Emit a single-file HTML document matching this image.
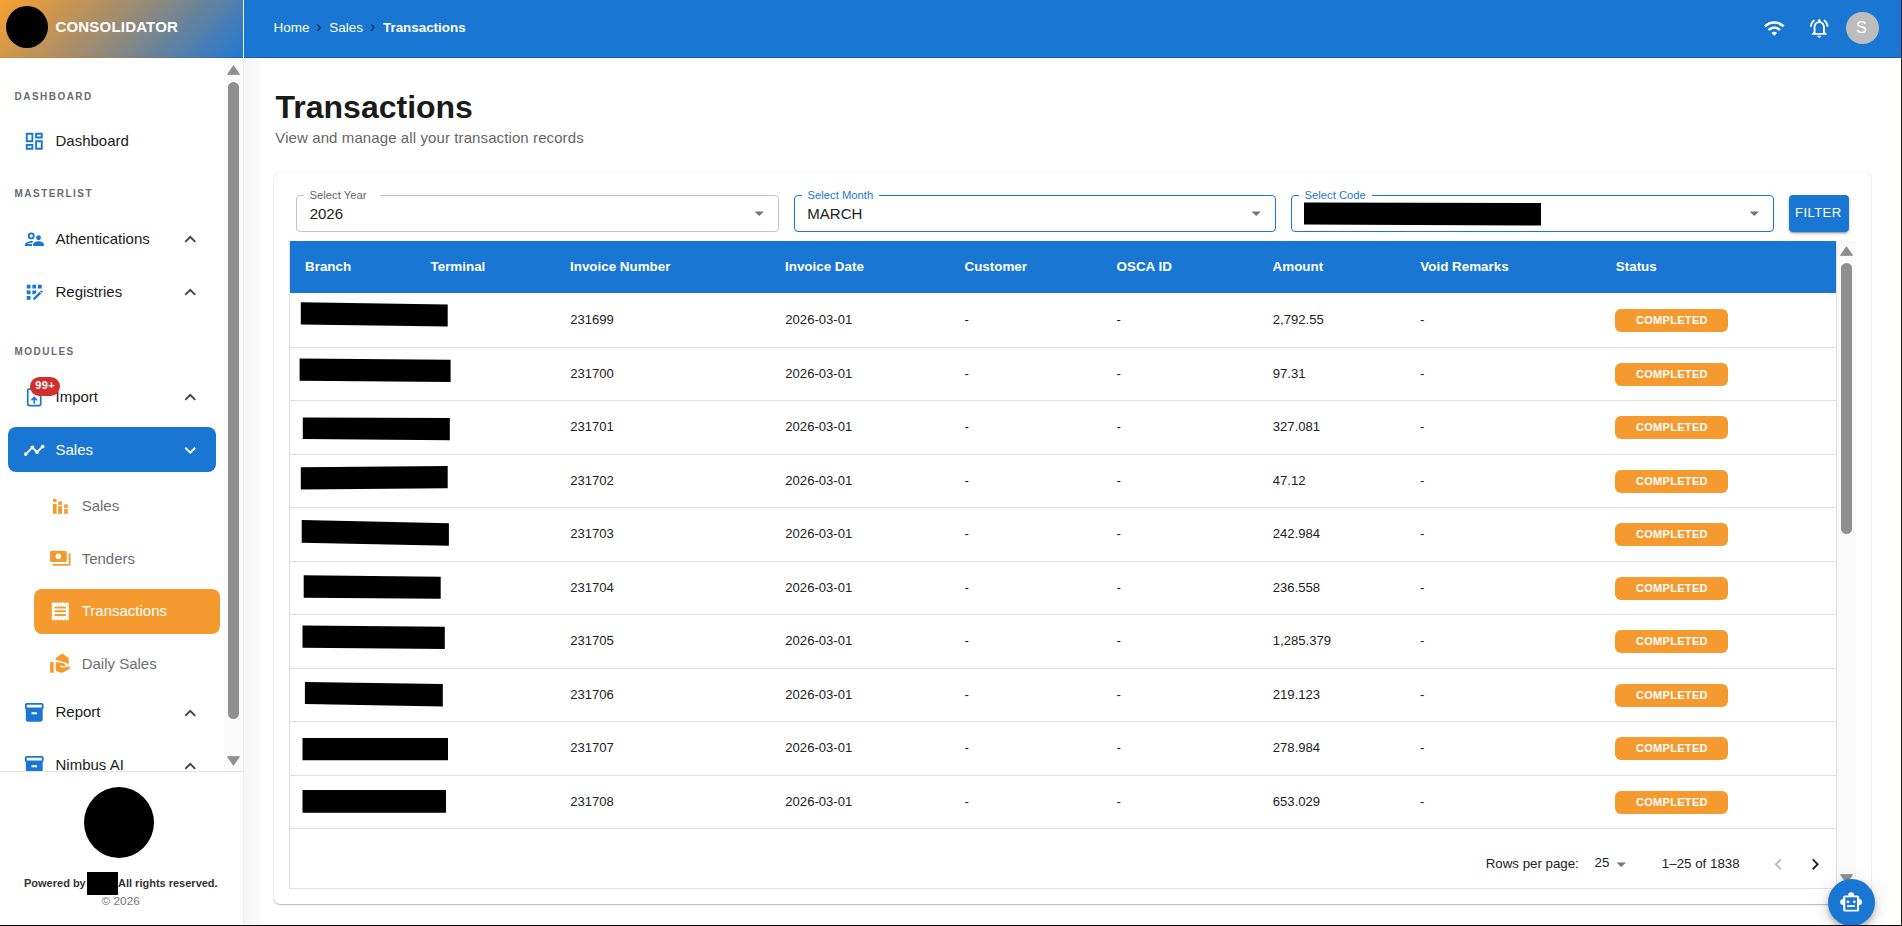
<!DOCTYPE html>
<html><head><meta charset="utf-8"><title>Transactions</title>
<style>
*{box-sizing:border-box;margin:0;padding:0}
html,body{width:1902px;height:926px;overflow:hidden;background:#fff;font-family:'Liberation Sans', sans-serif}
.t{position:absolute;white-space:nowrap;line-height:normal;font-family:'Liberation Sans', sans-serif}
.ic{position:absolute;display:block}
.abs{position:absolute}
</style></head><body>
<div class="abs" style="left:0;top:0;width:243px;height:58px;background:linear-gradient(135deg,#f7a130 0%,#a08c70 45%,#1f78d4 100%)"></div>
<div class="abs" style="left:0;top:57px;width:243px;height:1px;background:linear-gradient(90deg,#dc8a26,#9a7a50 50%,#1f64b8)"></div>
<div class="abs" style="left:6px;top:6px;width:42px;height:42px;border-radius:50%;background:#000"></div>
<div class="t" style="left:55.4px;top:18.42px;font-size:15px;color:#fff;font-weight:bold;letter-spacing:0.2px;">CONSOLIDATOR</div>
<div class="abs" style="left:243px;top:0;width:1px;height:926px;background:#e8eef7"></div>
<div class="abs" style="left:224px;top:58px;width:19px;height:713px;background:#fafafa"></div>
<svg class="ic" style="left:227px;top:65px;width:13px;height:10px" viewBox="0 0 13 10"><path d="M6.5 0.6 L12.6 9.4 L0.4 9.4z" fill="#8f8f8f" stroke="#8f8f8f" stroke-width="0.8" stroke-linejoin="round"/></svg>
<div class="abs" style="left:228px;top:82px;width:11px;height:637px;border-radius:5.5px;background:#8f8f8f"></div>
<svg class="ic" style="left:227px;top:756px;width:13px;height:10px" viewBox="0 0 13 10"><path d="M0.4 0.6 L12.6 0.6 L6.5 9.4z" fill="#8f8f8f" stroke="#8f8f8f" stroke-width="0.8" stroke-linejoin="round"/></svg>
<div class="t" style="left:14.6px;top:91.15px;font-size:10px;color:#6b6b6b;font-weight:bold;letter-spacing:1.45px;">DASHBOARD</div>
<div class="t" style="left:14.6px;top:188.05px;font-size:10px;color:#6b6b6b;font-weight:bold;letter-spacing:1.45px;">MASTERLIST</div>
<div class="t" style="left:14.6px;top:346.05px;font-size:10px;color:#6b6b6b;font-weight:bold;letter-spacing:1.45px;">MODULES</div>
<svg class="ic" style="left:23.2px;top:130.2px;width:22.5px;height:22.5px" viewBox="0 0 24 24"><path fill="#1976d2" d="M19 5v2h-4V5h4M9 5v6H5V5h4m10 8v6h-4v-6h4M9 17v2H5v-2h4M21 3h-8v6h8V3zM11 3H3v10h8V3zm10 8h-8v10h8V11zm-10 4H3v6h8v-6z"/></svg>
<div class="t" style="left:55.5px;top:132.03px;font-size:15px;color:#212121;font-weight:normal;letter-spacing:0px;">Dashboard</div>
<svg class="ic" style="left:20px;top:228px;width:30px;height:22px" viewBox="20 228 30 22"><g fill="#1976d2"><circle cx="31.3" cy="235.9" r="2.5" fill="none" stroke="#1976d2" stroke-width="1.9"/><circle cx="38.5" cy="237.8" r="2.45"/><path d="M33.1 245.9V244.3C33.1 242.3 36 241.3 38.45 241.3C40.9 241.3 43.8 242.3 43.8 244.3V245.9Z"/><path d="M24.9 245.9V244.6C24.9 242.4 28.6 241 33.2 240.9L32.2 242.7C29.5 242.8 27.2 243.5 26.9 244.1H32V245.9Z"/></g></svg>
<div class="t" style="left:55.5px;top:230.12px;font-size:15px;color:#212121;font-weight:normal;letter-spacing:0px;">Athentications</div>
<svg class="ic" style="left:179px;top:228px;width:22.5px;height:22.5px" viewBox="0 0 24 24"><path fill="#424242" d="M12 8l-6 6 1.41 1.41L12 10.83l4.59 4.58L18 14z"/></svg>
<svg class="ic" style="left:23px;top:280.9px;width:22.5px;height:22.5px" viewBox="0 0 24 24"><path fill="#1976d2" d="M10 4h4v4h-4zM4 16h4v4H4zm0-6h4v4H4zm0-6h4v4H4zm10 8.42V10h-4v4h2.42zm6.88-1.13-1.17-1.17c-.16-.16-.42-.16-.58 0l-.88.88 1.75 1.75.88-.88c.16-.16.16-.42 0-.58zM11 18.25V20h1.75l6.67-6.67-1.75-1.75zM16 4h4v4h-4z"/></svg>
<div class="t" style="left:55.5px;top:282.62px;font-size:15px;color:#212121;font-weight:normal;letter-spacing:0px;">Registries</div>
<svg class="ic" style="left:179px;top:280.7px;width:22.5px;height:22.5px" viewBox="0 0 24 24"><path fill="#424242" d="M12 8l-6 6 1.41 1.41L12 10.83l4.59 4.58L18 14z"/></svg>
<svg class="ic" style="left:22px;top:384px;width:24px;height:26px" viewBox="22 384 24 26"><rect x="27.75" y="388.95" width="13" height="16.7" rx="1.8" fill="none" stroke="#1976d2" stroke-width="1.7"/><path fill="#1976d2" d="M34.25 396.3L37.6 399.7L36.5 400.8L35.1 399.4V403.6H33.4V399.4L32 400.8L30.9 399.7Z"/></svg>
<div class="t" style="left:55.5px;top:387.82px;font-size:15px;color:#212121;font-weight:normal;letter-spacing:0px;">Import</div>
<svg class="ic" style="left:179px;top:386px;width:22.5px;height:22.5px" viewBox="0 0 24 24"><path fill="#424242" d="M12 8l-6 6 1.41 1.41L12 10.83l4.59 4.58L18 14z"/></svg>
<div class="abs" style="left:30px;top:377px;width:30px;height:19px;border-radius:9.5px;background:#d32f2f"></div>
<div class="t" style="left:35.3px;top:379.35px;font-size:11px;color:#fff;font-weight:bold;letter-spacing:0.3px;">99+</div>
<div class="abs" style="left:8px;top:427px;width:208px;height:45px;border-radius:8px;background:#1976d2"></div>
<svg class="ic" style="left:23px;top:439.2px;width:22.5px;height:22.5px" viewBox="0 0 24 24"><path fill="#fff" d="M23 8c0 1.1-.9 2-2 2-.18 0-.35-.02-.51-.07l-3.56 3.55c.05.16.07.34.07.52 0 1.1-.9 2-2 2s-2-.9-2-2c0-.18.02-.36.07-.52l-2.55-2.55c-.16.05-.34.07-.52.07s-.36-.02-.52-.07l-4.55 4.56c.05.16.07.33.07.51 0 1.1-.9 2-2 2s-2-.9-2-2 .9-2 2-2c.18 0 .35.02.51.07l4.56-4.55C8.02 9.36 8 9.18 8 9c0-1.1.9-2 2-2s2 .9 2 2c0 .18-.02.36-.07.52l2.55 2.55c.16-.05.34-.07.52-.07s.36.02.52.07l3.55-3.56C19.02 8.35 19 8.18 19 8c0-1.1.9-2 2-2s2 .9 2 2z"/></svg>
<div class="t" style="left:55.5px;top:441.43px;font-size:15px;color:#fff;font-weight:normal;letter-spacing:0px;">Sales</div>
<svg class="ic" style="left:179px;top:439px;width:22.5px;height:22.5px" viewBox="0 0 24 24"><path fill="#fff" d="M16.59 8.59L12 13.17 7.41 8.59 6 10l6 6 6-6z"/></svg>
<svg class="ic" style="left:48px;top:494px;width:24px;height:24px" viewBox="48 494 24 24"><g fill="#f59a2f"><rect x="52.9" y="498.9" width="3.7" height="3.1"/><rect x="52.9" y="503.9" width="3.7" height="9.9"/><rect x="58.2" y="501.4" width="3.8" height="3.5"/><rect x="58.2" y="506.1" width="3.8" height="7.7"/><rect x="64.1" y="504.4" width="3.7" height="3.5"/><rect x="64.1" y="509.1" width="3.7" height="4.7"/></g></svg>
<div class="t" style="left:81.7px;top:497.43px;font-size:15px;color:#6e6e6e;font-weight:normal;letter-spacing:0px;">Sales</div>
<svg class="ic" style="left:49.3px;top:546.6px;width:22.5px;height:22.5px" viewBox="0 0 24 24"><path fill="#f59a2f" d="M19 14V6c0-1.1-.9-2-2-2H3c-1.1 0-2 .9-2 2v8c0 1.1.9 2 2 2h14c1.1 0 2-.9 2-2zm-9-1c-1.66 0-3-1.34-3-3s1.34-3 3-3 3 1.34 3 3-1.34 3-3 3zm13-6v11c0 1.1-.9 2-2 2H4v-2h17V7h2z"/></svg>
<div class="t" style="left:81.7px;top:549.62px;font-size:15px;color:#6e6e6e;font-weight:normal;letter-spacing:0px;">Tenders</div>
<div class="abs" style="left:34px;top:589px;width:186px;height:45px;border-radius:8px;background:#f59a2f"></div>
<svg class="ic" style="left:48.9px;top:599.9px;width:22.5px;height:22.5px" viewBox="0 0 24 24"><path fill="#fff" d="M18 17H6v-2h12v2zm0-4H6v-2h12v2zm0-4H6V7h12v2zM3 22l1.5-1.5L6 22l1.5-1.5L9 22l1.5-1.5L12 22l1.5-1.5L15 22l1.5-1.5L18 22l1.5-1.5L21 22V2l-1.5 1.5L18 2l-1.5 1.5L15 2l-1.5 1.5L12 2l-1.5 1.5L9 2 7.5 3.5 6 2 4.5 3.5 3 2v20z"/></svg>
<div class="t" style="left:81.7px;top:602.02px;font-size:15px;color:#fff;font-weight:normal;letter-spacing:0px;">Transactions</div>
<svg class="ic" style="left:48px;top:650px;width:24px;height:26px" viewBox="48 650 24 26"><g fill="#f59a2f"><rect x="50.1" y="662.1" width="3.6" height="10.7"/><path d="M62.3 653.4L68.7 658V665.6C68.2 664.4 67.3 663.6 66 663.1L60.4 661.1C59.3 660.7 57.6 660.3 55.7 660.3V658Z"/><path d="M55.7 662.2H58.2C59.8 662.2 61.3 662.6 62.6 663.1L64.6 663.9C65.4 664.3 65.6 665.2 65.2 665.9C64.8 666.5 64.1 666.7 63.4 666.5L60.3 665.6L59.9 666.6L62.5 667.5C63.3 667.8 64.1 667.8 64.9 667.5L69.6 666.3L69.8 668.8L64 672C62.9 672.7 61.5 672.9 60.3 672.5L55.7 670.7Z"/></g></svg>
<div class="t" style="left:81.7px;top:654.62px;font-size:15px;color:#6e6e6e;font-weight:normal;letter-spacing:0px;">Daily Sales</div>
<svg class="ic" style="left:23.1px;top:701.1px;width:22.5px;height:22.5px" viewBox="0 0 24 24"><path fill="#1976d2" d="M20 2H4c-1 0-2 .9-2 2v3.01c0 .72.43 1.34 1 1.69V20c0 1.1 1.1 2 2 2h14c.9 0 2-.9 2-2V8.7c.57-.35 1-.97 1-1.69V4c0-1.1-1-2-2-2zm-5 12H9v-2h6v2zm5-7H4V4l16-.02V7z"/></svg>
<div class="t" style="left:55.5px;top:703.32px;font-size:15px;color:#212121;font-weight:normal;letter-spacing:0px;">Report</div>
<svg class="ic" style="left:179px;top:701.5px;width:22.5px;height:22.5px" viewBox="0 0 24 24"><path fill="#424242" d="M12 8l-6 6 1.41 1.41L12 10.83l4.59 4.58L18 14z"/></svg>
<div class="abs" style="left:0;top:740px;width:224px;height:31px;overflow:hidden">
<svg class="ic" style="left:23.1px;top:14.100000000000023px;width:22.5px;height:22.5px" viewBox="0 0 24 24"><path fill="#1976d2" d="M20 2H4c-1 0-2 .9-2 2v3.01c0 .72.43 1.34 1 1.69V20c0 1.1 1.1 2 2 2h14c.9 0 2-.9 2-2V8.7c.57-.35 1-.97 1-1.69V4c0-1.1-1-2-2-2zm-5 12H9v-2h6v2zm5-7H4V4l16-.02V7z"/></svg>
<div class="t" style="left:55.5px;top:16.42px;font-size:15px;color:#212121;font-weight:normal;letter-spacing:0px;">Nimbus AI</div>
<svg class="ic" style="left:179px;top:14.5px;width:22.5px;height:22.5px" viewBox="0 0 24 24"><path fill="#424242" d="M12 8l-6 6 1.41 1.41L12 10.83l4.59 4.58L18 14z"/></svg>
</div>
<div class="abs" style="left:0;top:771px;width:243px;height:1px;background:#e3e3e3"></div>
<div class="abs" style="left:84px;top:787px;width:70px;height:71px;border-radius:50%;background:#000"></div>
<div class="t" style="left:24px;top:877.14px;font-size:11px;color:#333;font-weight:bold;letter-spacing:0px;">Powered by</div>
<div class="abs" style="left:87px;top:872px;width:30.5px;height:22.5px;background:#000"></div>
<div class="t" style="left:118px;top:877.14px;font-size:11px;color:#333;font-weight:bold;letter-spacing:0px;">All rights reserved.</div>
<div class="t" style="left:101.6px;top:894.42px;font-size:11.8px;color:#777;font-weight:normal;letter-spacing:0px;">© 2026</div>
<div class="abs" style="left:244px;top:0;width:1658px;height:58px;background:#1976d2"></div>
<div class="abs" style="left:244px;top:57px;width:1658px;height:1px;background:#0d62c0"></div>
<div class="t" style="left:273.4px;top:20.38px;font-size:13.5px;color:#fff;font-weight:normal;letter-spacing:0px;">Home</div>
<div class="t" style="left:316.3px;top:18.12px;font-size:16px;color:#0a2a50;font-weight:normal;letter-spacing:0px;">›</div>
<div class="t" style="left:329.3px;top:20.38px;font-size:13.5px;color:#fff;font-weight:normal;letter-spacing:0px;">Sales</div>
<div class="t" style="left:370.1px;top:18.12px;font-size:16px;color:#0a2a50;font-weight:normal;letter-spacing:0px;">›</div>
<div class="t" style="left:383px;top:20.17px;font-size:13.4px;color:#fff;font-weight:bold;letter-spacing:0px;">Transactions</div>
<svg class="ic" style="left:1762.5px;top:17px;width:22.5px;height:22.5px" viewBox="0 0 24 24"><path fill="#fff" d="M1 9l2 2c4.97-4.97 13.03-4.97 18 0l2-2C16.93 2.93 7.08 2.93 1 9zm8 8l3 3 3-3c-1.65-1.66-4.34-1.66-6 0zm-4-4l2 2c2.76-2.76 7.24-2.76 10 0l2-2C15.14 9.14 8.87 9.14 5 13z"/></svg>
<svg class="ic" style="left:1808px;top:17px;width:22.5px;height:22.5px" viewBox="0 0 24 24"><path fill="#fff" d="M12 22c1.1 0 2-.9 2-2h-4c0 1.1.9 2 2 2zm6-6v-5c0-3.07-1.64-5.64-4.5-6.32V4c0-.83-.67-1.5-1.5-1.5s-1.5.67-1.5 1.5v.68C7.63 5.36 6 7.92 6 11v5l-2 2v1h16v-1l-2-2zm-2 1H8v-6c0-2.48 1.51-4.5 4-4.5s4 2.02 4 4.5v6zM7.58 4.08 6.15 2.65C3.75 4.48 2.17 7.3 2.03 10.5h2c.15-2.65 1.51-4.97 3.55-6.42zm12.39 6.42h2c-.15-3.2-1.73-6.02-4.12-7.85l-1.42 1.43c2.02 1.45 3.39 3.77 3.54 6.42z"/></svg>
<div class="abs" style="left:1846px;top:12px;width:32.5px;height:32px;border-radius:50%;background:#bdbdbd"></div>
<div class="t" style="left:1856px;top:18.72px;font-size:16px;color:#fff;font-weight:normal;letter-spacing:0px;">S</div>
<div class="abs" style="left:244px;top:58px;width:22px;height:868px;background:linear-gradient(90deg,#f6f6f6,#f9f9f9 50%,#ffffff)"></div>
<div class="t" style="left:275.5px;top:89.14px;font-size:32px;color:#1a1a1a;font-weight:bold;letter-spacing:0px;">Transactions</div>
<div class="t" style="left:275.3px;top:128.93px;font-size:15px;color:#666;font-weight:normal;letter-spacing:0.1px;">View and manage all your transaction records</div>
<div class="abs" style="left:274px;top:172px;width:1597px;height:732px;border-radius:6px;background:#fff;box-shadow:0 1px 1.5px rgba(0,0,0,0.28),0 0 1px rgba(0,0,0,0.14)"></div>
<div class="abs" style="left:296px;top:195px;width:483px;height:37px;border:1px solid #c4c4c4;border-radius:4px"></div>
<div class="abs" style="left:304px;top:193px;width:76px;height:4px;background:#fff"></div>
<div class="t" style="left:309.5px;top:188.72px;font-size:11.25px;color:#666;font-weight:normal;letter-spacing:0px;">Select Year</div>
<div class="t" style="left:309.7px;top:205.33px;font-size:15px;color:#212121;font-weight:normal;letter-spacing:0px;">2026</div>
<svg class="ic" style="left:748.1px;top:201.8px;width:22.5px;height:22.5px" viewBox="0 0 24 24"><path fill="#757575" d="M7 10l5 5 5-5z"/></svg>
<div class="abs" style="left:794px;top:195px;width:482px;height:37px;border:1px solid #1976d2;border-radius:4px"></div>
<div class="abs" style="left:802px;top:193px;width:77px;height:4px;background:#fff"></div>
<div class="t" style="left:807.5px;top:188.72px;font-size:11.25px;color:#1976d2;font-weight:normal;letter-spacing:0px;">Select Month</div>
<div class="t" style="left:807.3px;top:205.33px;font-size:15px;color:#212121;font-weight:normal;letter-spacing:0px;">MARCH</div>
<svg class="ic" style="left:1245.1px;top:201.8px;width:22.5px;height:22.5px" viewBox="0 0 24 24"><path fill="#757575" d="M7 10l5 5 5-5z"/></svg>
<div class="abs" style="left:1291px;top:195px;width:482.5px;height:37px;border:1px solid #1976d2;border-radius:4px"></div>
<div class="abs" style="left:1299px;top:193px;width:73px;height:4px;background:#fff"></div>
<div class="t" style="left:1304.5px;top:188.72px;font-size:11.25px;color:#1976d2;font-weight:normal;letter-spacing:0px;">Select Code</div>
<svg class="ic" style="left:1300px;top:200px;width:250px;height:30px" viewBox="1300 200 250 30"><polygon points="1304,202.4 1541,203.1 1541,225.6 1304,224.5" fill="#000"/></svg>
<svg class="ic" style="left:1742.6px;top:201.8px;width:22.5px;height:22.5px" viewBox="0 0 24 24"><path fill="#757575" d="M7 10l5 5 5-5z"/></svg>
<div class="abs" style="left:1789px;top:195px;width:60px;height:37px;border-radius:4px;background:#1976d2;box-shadow:0 3px 1px -2px rgba(0,0,0,.2),0 2px 2px 0 rgba(0,0,0,.14),0 1px 5px 0 rgba(0,0,0,.12)"></div>
<div class="t" style="left:1795px;top:204.72px;font-size:13.125px;color:#fff;font-weight:normal;letter-spacing:0.4px;">FILTER</div>
<div class="abs" style="left:289px;top:241px;width:1568px;height:648px;border:1px solid #e0e0e0;border-top:none;border-right:none"></div>
<div class="abs" style="left:290px;top:241px;width:1546px;height:52px;background:#1976d2"></div>
<div class="abs" style="left:1836px;top:241px;width:1px;height:647px;background:#e0e0e0"></div>
<div class="t" style="left:305px;top:258.77px;font-size:13.4px;color:#fff;font-weight:bold;letter-spacing:0px;">Branch</div>
<div class="t" style="left:430.5px;top:258.77px;font-size:13.4px;color:#fff;font-weight:bold;letter-spacing:0px;">Terminal</div>
<div class="t" style="left:570px;top:258.77px;font-size:13.4px;color:#fff;font-weight:bold;letter-spacing:0px;">Invoice Number</div>
<div class="t" style="left:785px;top:258.77px;font-size:13.4px;color:#fff;font-weight:bold;letter-spacing:0px;">Invoice Date</div>
<div class="t" style="left:964.5px;top:258.77px;font-size:13.4px;color:#fff;font-weight:bold;letter-spacing:0px;">Customer</div>
<div class="t" style="left:1116.6px;top:258.77px;font-size:13.4px;color:#fff;font-weight:bold;letter-spacing:0px;">OSCA ID</div>
<div class="t" style="left:1272.6px;top:258.77px;font-size:13.4px;color:#fff;font-weight:bold;letter-spacing:0px;">Amount</div>
<div class="t" style="left:1420.3px;top:258.77px;font-size:13.4px;color:#fff;font-weight:bold;letter-spacing:0px;">Void Remarks</div>
<div class="t" style="left:1615.8px;top:258.77px;font-size:13.4px;color:#fff;font-weight:bold;letter-spacing:0px;">Status</div>
<svg class="ic" style="left:0;top:0;width:1902px;height:926px" viewBox="0 0 1902 926"><polygon points="300.8,302.3 447.7,304.6 447.7,326.5 300.8,324.4" fill="#000"/><polygon points="299.6,358.6 450.6,359.7 450.6,381.9 299.6,380.7" fill="#000"/><polygon points="302.8,417.4 449.8,418 449.8,440.2 302.8,439" fill="#000"/><polygon points="300.8,467.3 447.7,466.1 447.7,488.3 300.8,489.5" fill="#000"/><polygon points="301.7,520 448.9,523.3 448.9,545.7 301.7,542.8" fill="#000"/><polygon points="303.7,575.2 440.7,576.7 440.7,598.8 303.7,597.7" fill="#000"/><polygon points="302.5,625.6 444.8,626.8 444.8,649 302.5,647.8" fill="#000"/><polygon points="304.9,681.9 442.8,684 442.8,706.4 304.9,704" fill="#000"/><polygon points="302.5,737.9 448,737.9 448,760.3 302.5,760.3" fill="#000"/><polygon points="302.5,790 446,790 446,812.8 302.5,812.8" fill="#000"/></svg>
<div class="abs" style="left:290px;top:346.5px;width:1546px;height:1px;background:#e0e0e0"></div>
<div class="t" style="left:570.2px;top:312.24px;font-size:13.1px;color:#212121;font-weight:normal;letter-spacing:0px;">231699</div>
<div class="t" style="left:785.3px;top:312.24px;font-size:13.1px;color:#212121;font-weight:normal;letter-spacing:0px;">2026-03-01</div>
<div class="t" style="left:964.5px;top:312.24px;font-size:13.1px;color:#212121;font-weight:normal;letter-spacing:0px;">-</div>
<div class="t" style="left:1116.6px;top:312.24px;font-size:13.1px;color:#212121;font-weight:normal;letter-spacing:0px;">-</div>
<div class="t" style="left:1272.8px;top:312.24px;font-size:13.1px;color:#212121;font-weight:normal;letter-spacing:0px;">2,792.55</div>
<div class="t" style="left:1420px;top:312.24px;font-size:13.1px;color:#212121;font-weight:normal;letter-spacing:0px;">-</div>
<div class="abs" style="left:1615px;top:309.0px;width:113px;height:23px;border-radius:6px;background:#f59a2f"></div>
<div class="t" style="left:1636px;top:314.05px;font-size:11px;color:#fff;font-weight:bold;letter-spacing:0.3px;">COMPLETED</div>
<div class="abs" style="left:290px;top:400.0px;width:1546px;height:1px;background:#e0e0e0"></div>
<div class="t" style="left:570.2px;top:365.74px;font-size:13.1px;color:#212121;font-weight:normal;letter-spacing:0px;">231700</div>
<div class="t" style="left:785.3px;top:365.74px;font-size:13.1px;color:#212121;font-weight:normal;letter-spacing:0px;">2026-03-01</div>
<div class="t" style="left:964.5px;top:365.74px;font-size:13.1px;color:#212121;font-weight:normal;letter-spacing:0px;">-</div>
<div class="t" style="left:1116.6px;top:365.74px;font-size:13.1px;color:#212121;font-weight:normal;letter-spacing:0px;">-</div>
<div class="t" style="left:1272.8px;top:365.74px;font-size:13.1px;color:#212121;font-weight:normal;letter-spacing:0px;">97.31</div>
<div class="t" style="left:1420px;top:365.74px;font-size:13.1px;color:#212121;font-weight:normal;letter-spacing:0px;">-</div>
<div class="abs" style="left:1615px;top:362.5px;width:113px;height:23px;border-radius:6px;background:#f59a2f"></div>
<div class="t" style="left:1636px;top:367.55px;font-size:11px;color:#fff;font-weight:bold;letter-spacing:0.3px;">COMPLETED</div>
<div class="abs" style="left:290px;top:453.5px;width:1546px;height:1px;background:#e0e0e0"></div>
<div class="t" style="left:570.2px;top:419.24px;font-size:13.1px;color:#212121;font-weight:normal;letter-spacing:0px;">231701</div>
<div class="t" style="left:785.3px;top:419.24px;font-size:13.1px;color:#212121;font-weight:normal;letter-spacing:0px;">2026-03-01</div>
<div class="t" style="left:964.5px;top:419.24px;font-size:13.1px;color:#212121;font-weight:normal;letter-spacing:0px;">-</div>
<div class="t" style="left:1116.6px;top:419.24px;font-size:13.1px;color:#212121;font-weight:normal;letter-spacing:0px;">-</div>
<div class="t" style="left:1272.8px;top:419.24px;font-size:13.1px;color:#212121;font-weight:normal;letter-spacing:0px;">327.081</div>
<div class="t" style="left:1420px;top:419.24px;font-size:13.1px;color:#212121;font-weight:normal;letter-spacing:0px;">-</div>
<div class="abs" style="left:1615px;top:416.0px;width:113px;height:23px;border-radius:6px;background:#f59a2f"></div>
<div class="t" style="left:1636px;top:421.05px;font-size:11px;color:#fff;font-weight:bold;letter-spacing:0.3px;">COMPLETED</div>
<div class="abs" style="left:290px;top:507.0px;width:1546px;height:1px;background:#e0e0e0"></div>
<div class="t" style="left:570.2px;top:472.74px;font-size:13.1px;color:#212121;font-weight:normal;letter-spacing:0px;">231702</div>
<div class="t" style="left:785.3px;top:472.74px;font-size:13.1px;color:#212121;font-weight:normal;letter-spacing:0px;">2026-03-01</div>
<div class="t" style="left:964.5px;top:472.74px;font-size:13.1px;color:#212121;font-weight:normal;letter-spacing:0px;">-</div>
<div class="t" style="left:1116.6px;top:472.74px;font-size:13.1px;color:#212121;font-weight:normal;letter-spacing:0px;">-</div>
<div class="t" style="left:1272.8px;top:472.74px;font-size:13.1px;color:#212121;font-weight:normal;letter-spacing:0px;">47.12</div>
<div class="t" style="left:1420px;top:472.74px;font-size:13.1px;color:#212121;font-weight:normal;letter-spacing:0px;">-</div>
<div class="abs" style="left:1615px;top:469.5px;width:113px;height:23px;border-radius:6px;background:#f59a2f"></div>
<div class="t" style="left:1636px;top:474.55px;font-size:11px;color:#fff;font-weight:bold;letter-spacing:0.3px;">COMPLETED</div>
<div class="abs" style="left:290px;top:560.5px;width:1546px;height:1px;background:#e0e0e0"></div>
<div class="t" style="left:570.2px;top:526.24px;font-size:13.1px;color:#212121;font-weight:normal;letter-spacing:0px;">231703</div>
<div class="t" style="left:785.3px;top:526.24px;font-size:13.1px;color:#212121;font-weight:normal;letter-spacing:0px;">2026-03-01</div>
<div class="t" style="left:964.5px;top:526.24px;font-size:13.1px;color:#212121;font-weight:normal;letter-spacing:0px;">-</div>
<div class="t" style="left:1116.6px;top:526.24px;font-size:13.1px;color:#212121;font-weight:normal;letter-spacing:0px;">-</div>
<div class="t" style="left:1272.8px;top:526.24px;font-size:13.1px;color:#212121;font-weight:normal;letter-spacing:0px;">242.984</div>
<div class="t" style="left:1420px;top:526.24px;font-size:13.1px;color:#212121;font-weight:normal;letter-spacing:0px;">-</div>
<div class="abs" style="left:1615px;top:523.0px;width:113px;height:23px;border-radius:6px;background:#f59a2f"></div>
<div class="t" style="left:1636px;top:528.04px;font-size:11px;color:#fff;font-weight:bold;letter-spacing:0.3px;">COMPLETED</div>
<div class="abs" style="left:290px;top:614.0px;width:1546px;height:1px;background:#e0e0e0"></div>
<div class="t" style="left:570.2px;top:579.74px;font-size:13.1px;color:#212121;font-weight:normal;letter-spacing:0px;">231704</div>
<div class="t" style="left:785.3px;top:579.74px;font-size:13.1px;color:#212121;font-weight:normal;letter-spacing:0px;">2026-03-01</div>
<div class="t" style="left:964.5px;top:579.74px;font-size:13.1px;color:#212121;font-weight:normal;letter-spacing:0px;">-</div>
<div class="t" style="left:1116.6px;top:579.74px;font-size:13.1px;color:#212121;font-weight:normal;letter-spacing:0px;">-</div>
<div class="t" style="left:1272.8px;top:579.74px;font-size:13.1px;color:#212121;font-weight:normal;letter-spacing:0px;">236.558</div>
<div class="t" style="left:1420px;top:579.74px;font-size:13.1px;color:#212121;font-weight:normal;letter-spacing:0px;">-</div>
<div class="abs" style="left:1615px;top:576.5px;width:113px;height:23px;border-radius:6px;background:#f59a2f"></div>
<div class="t" style="left:1636px;top:581.54px;font-size:11px;color:#fff;font-weight:bold;letter-spacing:0.3px;">COMPLETED</div>
<div class="abs" style="left:290px;top:667.5px;width:1546px;height:1px;background:#e0e0e0"></div>
<div class="t" style="left:570.2px;top:633.24px;font-size:13.1px;color:#212121;font-weight:normal;letter-spacing:0px;">231705</div>
<div class="t" style="left:785.3px;top:633.24px;font-size:13.1px;color:#212121;font-weight:normal;letter-spacing:0px;">2026-03-01</div>
<div class="t" style="left:964.5px;top:633.24px;font-size:13.1px;color:#212121;font-weight:normal;letter-spacing:0px;">-</div>
<div class="t" style="left:1116.6px;top:633.24px;font-size:13.1px;color:#212121;font-weight:normal;letter-spacing:0px;">-</div>
<div class="t" style="left:1272.8px;top:633.24px;font-size:13.1px;color:#212121;font-weight:normal;letter-spacing:0px;">1,285.379</div>
<div class="t" style="left:1420px;top:633.24px;font-size:13.1px;color:#212121;font-weight:normal;letter-spacing:0px;">-</div>
<div class="abs" style="left:1615px;top:630.0px;width:113px;height:23px;border-radius:6px;background:#f59a2f"></div>
<div class="t" style="left:1636px;top:635.04px;font-size:11px;color:#fff;font-weight:bold;letter-spacing:0.3px;">COMPLETED</div>
<div class="abs" style="left:290px;top:721.0px;width:1546px;height:1px;background:#e0e0e0"></div>
<div class="t" style="left:570.2px;top:686.74px;font-size:13.1px;color:#212121;font-weight:normal;letter-spacing:0px;">231706</div>
<div class="t" style="left:785.3px;top:686.74px;font-size:13.1px;color:#212121;font-weight:normal;letter-spacing:0px;">2026-03-01</div>
<div class="t" style="left:964.5px;top:686.74px;font-size:13.1px;color:#212121;font-weight:normal;letter-spacing:0px;">-</div>
<div class="t" style="left:1116.6px;top:686.74px;font-size:13.1px;color:#212121;font-weight:normal;letter-spacing:0px;">-</div>
<div class="t" style="left:1272.8px;top:686.74px;font-size:13.1px;color:#212121;font-weight:normal;letter-spacing:0px;">219.123</div>
<div class="t" style="left:1420px;top:686.74px;font-size:13.1px;color:#212121;font-weight:normal;letter-spacing:0px;">-</div>
<div class="abs" style="left:1615px;top:683.5px;width:113px;height:23px;border-radius:6px;background:#f59a2f"></div>
<div class="t" style="left:1636px;top:688.54px;font-size:11px;color:#fff;font-weight:bold;letter-spacing:0.3px;">COMPLETED</div>
<div class="abs" style="left:290px;top:774.5px;width:1546px;height:1px;background:#e0e0e0"></div>
<div class="t" style="left:570.2px;top:740.24px;font-size:13.1px;color:#212121;font-weight:normal;letter-spacing:0px;">231707</div>
<div class="t" style="left:785.3px;top:740.24px;font-size:13.1px;color:#212121;font-weight:normal;letter-spacing:0px;">2026-03-01</div>
<div class="t" style="left:964.5px;top:740.24px;font-size:13.1px;color:#212121;font-weight:normal;letter-spacing:0px;">-</div>
<div class="t" style="left:1116.6px;top:740.24px;font-size:13.1px;color:#212121;font-weight:normal;letter-spacing:0px;">-</div>
<div class="t" style="left:1272.8px;top:740.24px;font-size:13.1px;color:#212121;font-weight:normal;letter-spacing:0px;">278.984</div>
<div class="t" style="left:1420px;top:740.24px;font-size:13.1px;color:#212121;font-weight:normal;letter-spacing:0px;">-</div>
<div class="abs" style="left:1615px;top:737.0px;width:113px;height:23px;border-radius:6px;background:#f59a2f"></div>
<div class="t" style="left:1636px;top:742.04px;font-size:11px;color:#fff;font-weight:bold;letter-spacing:0.3px;">COMPLETED</div>
<div class="abs" style="left:290px;top:828.0px;width:1546px;height:1px;background:#e0e0e0"></div>
<div class="t" style="left:570.2px;top:793.74px;font-size:13.1px;color:#212121;font-weight:normal;letter-spacing:0px;">231708</div>
<div class="t" style="left:785.3px;top:793.74px;font-size:13.1px;color:#212121;font-weight:normal;letter-spacing:0px;">2026-03-01</div>
<div class="t" style="left:964.5px;top:793.74px;font-size:13.1px;color:#212121;font-weight:normal;letter-spacing:0px;">-</div>
<div class="t" style="left:1116.6px;top:793.74px;font-size:13.1px;color:#212121;font-weight:normal;letter-spacing:0px;">-</div>
<div class="t" style="left:1272.8px;top:793.74px;font-size:13.1px;color:#212121;font-weight:normal;letter-spacing:0px;">653.029</div>
<div class="t" style="left:1420px;top:793.74px;font-size:13.1px;color:#212121;font-weight:normal;letter-spacing:0px;">-</div>
<div class="abs" style="left:1615px;top:790.5px;width:113px;height:23px;border-radius:6px;background:#f59a2f"></div>
<div class="t" style="left:1636px;top:795.54px;font-size:11px;color:#fff;font-weight:bold;letter-spacing:0.3px;">COMPLETED</div>
<div class="t" style="left:1485.7px;top:856.06px;font-size:13.3px;color:#212121;font-weight:normal;letter-spacing:0px;">Rows per page:</div>
<div class="t" style="left:1594.6px;top:855.06px;font-size:13.3px;color:#212121;font-weight:normal;letter-spacing:0px;">25</div>
<svg class="ic" style="left:1609.5px;top:852.5px;width:22.5px;height:22.5px" viewBox="0 0 24 24"><path fill="#757575" d="M7 10l5 5 5-5z"/></svg>
<div class="t" style="left:1661.8px;top:856.02px;font-size:13.35px;color:#212121;font-weight:normal;letter-spacing:0px;">1–25 of 1838</div>
<svg class="ic" style="left:1767px;top:853px;width:22.5px;height:22.5px" viewBox="0 0 24 24"><path fill="#bdbdbd" d="M15.41 7.41 14 6l-6 6 6 6 1.41-1.41L10.83 12z"/></svg>
<svg class="ic" style="left:1803.5px;top:853px;width:22.5px;height:22.5px" viewBox="0 0 24 24"><path fill="#212121" d="M10 6 8.59 7.41 13.17 12l-4.58 4.59L10 18l6-6z"/></svg>
<div class="abs" style="left:1837px;top:241px;width:19px;height:647px;background:#fafafa"></div>
<svg class="ic" style="left:1840px;top:246px;width:13px;height:10px" viewBox="0 0 13 10"><path d="M6.5 0.6 L12.6 9.4 L0.4 9.4z" fill="#8f8f8f" stroke="#8f8f8f" stroke-width="0.8" stroke-linejoin="round"/></svg>
<div class="abs" style="left:1841px;top:263px;width:11px;height:271px;border-radius:5.5px;background:#8f8f8f"></div>
<svg class="ic" style="left:1840px;top:874px;width:13px;height:10px" viewBox="0 0 13 10"><path d="M0.4 0.6 L12.6 0.6 L6.5 9.4z" fill="#8f8f8f" stroke="#8f8f8f" stroke-width="0.8" stroke-linejoin="round"/></svg>
<div class="abs" style="left:1828px;top:879px;width:47px;height:47px;border-radius:50%;background:#1976d2;box-shadow:0 3px 5px -1px rgba(0,0,0,.2),0 6px 10px 0 rgba(0,0,0,.14),0 1px 18px 0 rgba(0,0,0,.12)"></div>
<svg class="ic" style="left:1836px;top:888px;width:30px;height:30px" viewBox="1836 888 30 30"><g fill="#fff"><circle cx="1851.1" cy="895.3" r="3"/><circle cx="1843.2" cy="902.1" r="3"/><circle cx="1859.1" cy="902.1" r="3"/><rect x="1843.2" y="895.6" width="15.9" height="16" rx="1.6"/></g><rect x="1845.3" y="897.3" width="11.7" height="12.5" fill="#1976d2"/><g fill="#fff"><circle cx="1848" cy="901.8" r="1.4"/><circle cx="1854.3" cy="901.8" r="1.4"/><rect x="1847" y="905.2" width="8" height="1.8"/></g></svg>
<div class="abs" style="left:0;top:925px;width:1902px;height:1px;background:#0c0c0c"></div>
<div class="abs" style="left:1901px;top:0;width:1px;height:926px;background:#27231f"></div>
</body></html>
